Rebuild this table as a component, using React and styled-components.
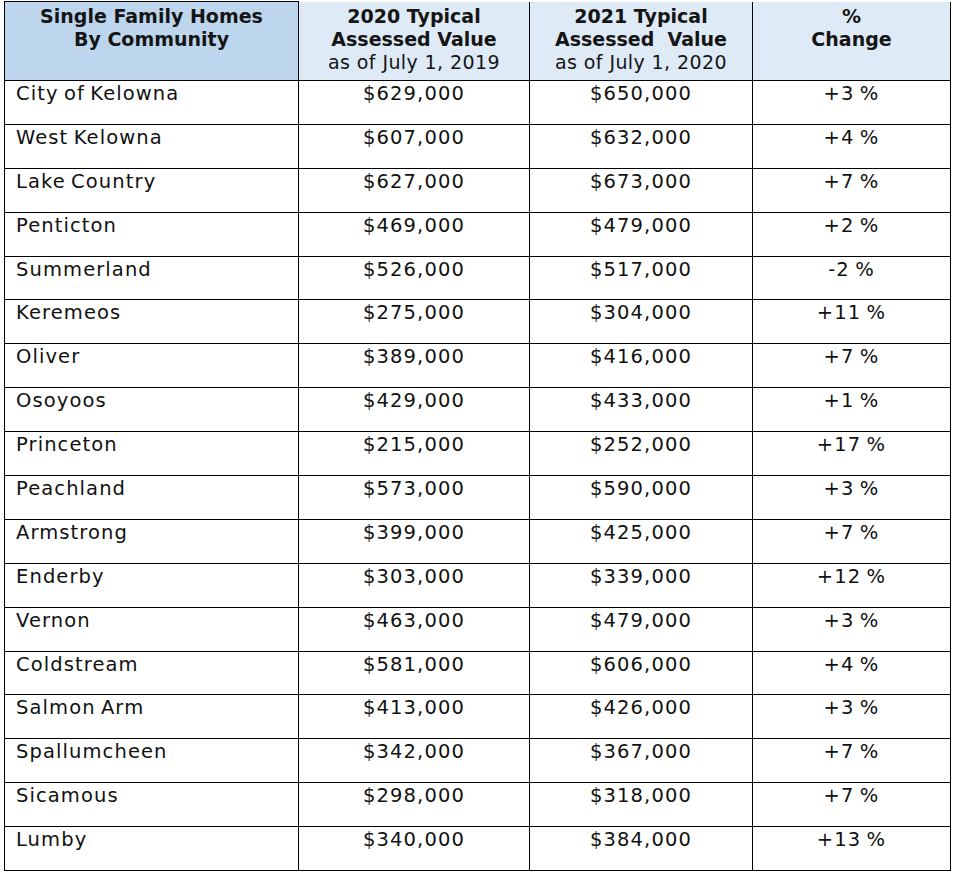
import styled, { createGlobalStyle } from "styled-components";

const GlobalStyle = createGlobalStyle`
  html, body {
    margin: 0;
    padding: 0;
    background: #ffffff;
  }
  body {
    font-family: "DejaVu Sans", "Liberation Sans", sans-serif;
    color: #111111;
  }
`;

const Page = styled.div`
  padding: 1px 4px 0 4px;
  width: 953px;
  box-sizing: border-box;
`;

const Table = styled.table`
  border-collapse: collapse;
  width: 946px;
  table-layout: fixed;
  font-size: 19px;
  line-height: 23px;
`;

const HeadCell = styled.th`
  background: ${(p) => (p.$dark ? "#bdd6ee" : "#deeaf6")};
  border: 1.5px solid #000;
  border-top: ${(p) => (p.$dark ? "1.5px solid #000" : "none")};
  height: 75px;
  padding: 3px 2px 0;
  vertical-align: top;
  text-align: center;
  font-weight: 600;
  color: #151515;
`;

const Sub = styled.span`
  font-weight: 400;
  letter-spacing: 0.4px;
`;

const Cell = styled.td`
  border: 1.5px solid #000;
  height: 43.9px;
  box-sizing: border-box;
  padding: 1px 11px 0;
  vertical-align: top;
  text-align: ${(p) => (p.$left ? "left" : "center")};
  font-size: 19.5px;
  letter-spacing: 1.1px;
  word-spacing: -2px;
  color: #111111;
`;

const rows = [
  ["City of Kelowna", "$629,000", "$650,000", "+3 %"],
  ["West Kelowna", "$607,000", "$632,000", "+4 %"],
  ["Lake Country", "$627,000", "$673,000", "+7 %"],
  ["Penticton", "$469,000", "$479,000", "+2 %"],
  ["Summerland", "$526,000", "$517,000", "-2 %"],
  ["Keremeos", "$275,000", "$304,000", "+11 %"],
  ["Oliver", "$389,000", "$416,000", "+7 %"],
  ["Osoyoos", "$429,000", "$433,000", "+1 %"],
  ["Princeton", "$215,000", "$252,000", "+17 %"],
  ["Peachland", "$573,000", "$590,000", "+3 %"],
  ["Armstrong", "$399,000", "$425,000", "+7 %"],
  ["Enderby", "$303,000", "$339,000", "+12 %"],
  ["Vernon", "$463,000", "$479,000", "+3 %"],
  ["Coldstream", "$581,000", "$606,000", "+4 %"],
  ["Salmon Arm", "$413,000", "$426,000", "+3 %"],
  ["Spallumcheen", "$342,000", "$367,000", "+7 %"],
  ["Sicamous", "$298,000", "$318,000", "+7 %"],
  ["Lumby", "$340,000", "$384,000", "+13 %"],
];

export default function App() {
  return (
    <>
      <GlobalStyle />
      <Page>
        <Table>
          <colgroup>
            <col style={{ width: 294 }} />
            <col style={{ width: 231 }} />
            <col style={{ width: 223 }} />
            <col style={{ width: 198 }} />
          </colgroup>
          <thead>
            <tr>
              <HeadCell $dark>
                Single Family Homes
                <br />
                By Community
              </HeadCell>
              <HeadCell>
                2020 Typical
                <br />
                Assessed Value
                <br />
                <Sub>as of July 1, 2019</Sub>
              </HeadCell>
              <HeadCell>
                2021 Typical
                <br />
                Assessed{"\u00a0 "}Value
                <br />
                <Sub>as of July 1, 2020</Sub>
              </HeadCell>
              <HeadCell>
                %
                <br />
                Change
              </HeadCell>
            </tr>
          </thead>
          <tbody>
            {rows.map((r) => (
              <tr key={r[0]}>
                <Cell $left>{r[0]}</Cell>
                <Cell>{r[1]}</Cell>
                <Cell>{r[2]}</Cell>
                <Cell>{r[3]}</Cell>
              </tr>
            ))}
          </tbody>
        </Table>
      </Page>
    </>
  );
}
